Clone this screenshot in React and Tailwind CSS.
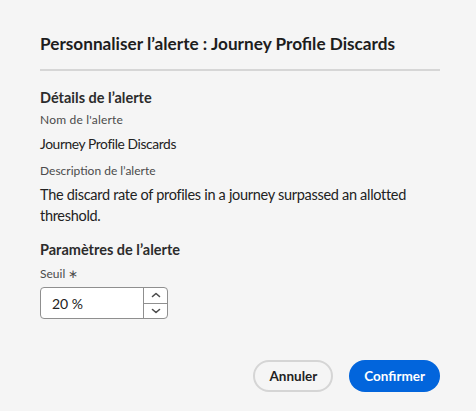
import React from "react";

export default function App() {
  return (
    <div
      className="w-[476px] h-[411px] bg-[#f5f5f5] pl-10 pr-[36px] pt-[32px] text-[#222222]"
      style={{ fontFamily: "Lato, 'Noto Sans', sans-serif" }}
    >
      <h1 className="text-[17.2px] leading-[24px] font-bold text-[#1d1d1d]">
        Personnaliser l’alerte : Journey Profile Discards
      </h1>
      <div className="mt-[13px] h-[2px] bg-[#d6d6d6]" />
      <h2 className="mt-[17px] text-[14.5px] leading-[20px] font-bold text-[#2c2c2c]">
        Détails de l’alerte
      </h2>
      <div className="mt-[4px] text-[12px] tracking-[0.2px] leading-[16px] text-[#4b4b4b]">Nom de l'alerte</div>
      <div className="mt-[6px] text-[13.8px] tracking-[-0.4px] leading-[20px] text-[#222222]">Journey Profile Discards</div>
      <div className="mt-[9px] text-[12px] leading-[16px] text-[#4b4b4b]">Description de l’alerte</div>
      <p className="mt-[5px] text-[14.5px] tracking-[-0.3px] leading-[21px] text-[#222222]">
        The discard rate of profiles in a journey surpassed an allotted threshold.
      </p>
      <h2 className="mt-[14px] text-[14.5px] leading-[20px] font-bold text-[#2c2c2c]">
        Paramètres de l’alerte
      </h2>
      <div className="mt-[6px] text-[12px] leading-[16px] text-[#4b4b4b]">Seuil ∗</div>
      <div className="mt-[5px] flex h-[32px] w-[128px] rounded-[4px] border border-[#8f8f8f] bg-white overflow-hidden">
        <div className="flex-1 flex items-center pl-[11px] text-[14px] text-[#222222]">20 %</div>
        <div className="w-[24px] flex flex-col border-l border-[#8f8f8f]">
          <div className="flex-1 flex items-center justify-center border-b border-[#8f8f8f]">
            <svg width="10" height="6" viewBox="0 0 10 6" fill="none" stroke="#4b4b4b" strokeWidth="1.6" strokeLinecap="round" strokeLinejoin="round">
              <path d="M1.5 4.5 L5 1.5 L8.5 4.5" />
            </svg>
          </div>
          <div className="flex-1 flex items-center justify-center">
            <svg width="10" height="6" viewBox="0 0 10 6" fill="none" stroke="#4b4b4b" strokeWidth="1.6" strokeLinecap="round" strokeLinejoin="round">
              <path d="M1.5 1.5 L5 4.5 L8.5 1.5" />
            </svg>
          </div>
        </div>
      </div>
      <div className="mt-[41px] flex justify-end gap-[16px]">
        <button className="h-[32px] px-[14px] rounded-full border-2 border-[#d5d5d5] bg-[#f5f5f5] text-[13.5px] font-bold text-[#222222]">
          Annuler
        </button>
        <button className="h-[32px] px-[15px] rounded-full bg-[#0265dc] text-[13.5px] font-bold text-white">
          Confirmer
        </button>
      </div>
    </div>
  );
}
